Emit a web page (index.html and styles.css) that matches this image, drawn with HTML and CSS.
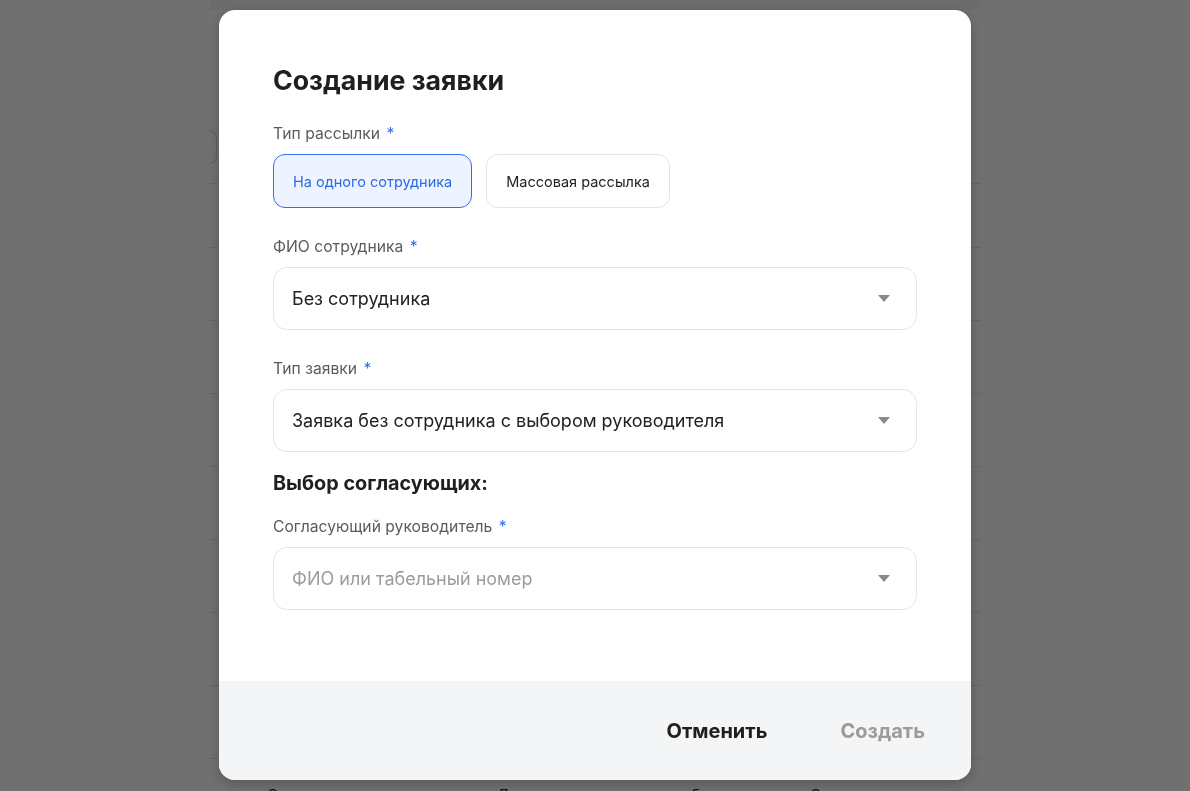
FILE: index.html
```
<!DOCTYPE html>
<html lang="ru">
  <head>
    <meta charset="utf-8">
    <meta content="width=device-width, initial-scale=1.0" name="viewport">
    <link rel="stylesheet" href="styles.css">
    <title>Создание заявки</title>
  </head>
  <body>
    <div class="page">
      <div class="page-top"></div>
      <div class="page-tools"><div class="search"></div></div>
      <div class="table">
        <div class="row"></div>
        <div class="row"></div>
        <div class="row"></div>
        <div class="row"></div>
        <div class="row"></div>
        <div class="row"></div>
        <div class="row"></div>
        <div class="row"></div>
        <div class="row row-text"><span>Согласование</span><span>Документ</span><span>бланк</span><span>Ответ</span></div>
      </div>
    </div>

    <div class="overlay">
      <div class="modal">
        <div class="modal-body">
          <h1>Создание заявки</h1>

          <div class="label">Тип рассылки <i>*</i></div>
          <div class="toggles">
            <button class="toggle active">На одного сотрудника</button>
            <button class="toggle">Массовая рассылка</button>
          </div>

          <div class="label">ФИО сотрудника <i>*</i></div>
          <div class="select">
            <span>Без сотрудника</span>
            <span class="caret"></span>
          </div>

          <div class="label">Тип заявки <i>*</i></div>
          <div class="select">
            <span>Заявка без сотрудника с выбором руководителя</span>
            <span class="caret"></span>
          </div>

          <h2>Выбор согласующих:</h2>

          <div class="label">Согласующий руководитель <i>*</i></div>
          <div class="select">
            <span class="placeholder">ФИО или табельный номер</span>
            <span class="caret"></span>
          </div>
        </div>

        <div class="modal-footer">
          <button class="btn">Отменить</button>
          <button class="btn disabled">Создать</button>
        </div>
      </div>
    </div>
  </body>
</html>
```

FILE: styles.css
```
* { box-sizing: border-box; }
body {
    margin: 0;
    background: #fff;
    font-family: Inter, "Noto Sans", sans-serif;
    color: #1f1f1f;
    height: 791px;
    overflow: hidden;
}

/* page under the overlay */
.page {
    margin-left: 209px;
    width: 771px;
    height: 791px;
    overflow: hidden;
}
.page-top {
    height: 10px;
    background: #f6f6f6;
}
.page-tools {
    height: 173px;
    padding-top: 120px;
}
.search {
    width: 8px;
    height: 34px;
    border: 1px solid #d8d8d8;
    border-left: none;
    border-radius: 0 10px 10px 0;
}
.table {
    border-top: 1px solid #e6e6e6;
}
.row {
    height: 73px;
    border-bottom: 1px solid #e6e6e6;
}
.row:first-child { height: 64px; }
.row-text {
    display: grid;
    grid-template-columns: 230px 194px 119px auto;
    padding: 26px 0 0 58px;
    color: #222;
    font-size: 15px;
    line-height: 20px;
    height: 60px;
    border: none;
    white-space: nowrap;
}

/* modal */
.overlay {
    position: fixed;
    inset: 0;
    background: rgba(0,0,0,.56);
    display: flex;
    justify-content: center;
    align-items: flex-start;
    padding-top: 10px;
}
.modal {
    width: 752px;
    height: 770px;
    background: #fff;
    border-radius: 16px;
    overflow: hidden;
    display: flex;
    flex-direction: column;
    box-shadow: 0 4px 14px rgba(0,0,0,.22);
}
.modal-body {
    flex: 1;
    padding: 54px 54px 0;
}
h1 {
    margin: 0 0 28px;
    font-size: 26.7px;
    line-height: 32px;
    font-weight: 700;
    color: #1f1f1f;
}
h2 {
    margin: -10px 0 22px;
    font-size: 19.8px;
    line-height: 24px;
    font-weight: 700;
    color: #1f1f1f;
}
.label {
    font-size: 15.7px;
    line-height: 20px;
    color: #5b5b5b;
    margin-bottom: 10px;
}
.label i {
    font-style: normal;
    color: #2c6cf0;
    margin-left: 2px;
}
.toggles {
    display: flex;
    gap: 14px;
    margin-bottom: 29px;
}
.toggle {
    height: 54px;
    padding: 0 19px;
    border: 1px solid #e2e4e9;
    border-radius: 12px;
    background: #fff;
    font-family: inherit;
    font-size: 14.5px;
    color: #222;
}
.toggle.active {
    background: #edf3ff;
    border-color: #2f6ff0;
    color: #2b6be6;
}
.select {
    height: 63px;
    border: 1px solid #e3e5ea;
    border-radius: 14px;
    display: flex;
    align-items: center;
    justify-content: space-between;
    padding: 0 26px 0 18px;
    font-size: 18px;
    color: #222;
    margin-bottom: 29px;
}
.placeholder { color: #9c9c9c; }
.caret {
    width: 0;
    height: 0;
    border-left: 6px solid transparent;
    border-right: 6px solid transparent;
    border-top: 7px solid #8a8a8a;
}
.modal-footer {
    height: 99px;
    background: #f4f5f7;
    display: flex;
    justify-content: flex-end;
    align-items: center;
    gap: 33px;
    padding: 0 26px 0 0;
}
.btn {
    border: none;
    background: transparent;
    font-family: inherit;
    font-size: 20px;
    font-weight: 700;
    color: #1f1f1f;
    padding: 10px 20px;
}
.btn.disabled { color: #9b9b9b; }
```
